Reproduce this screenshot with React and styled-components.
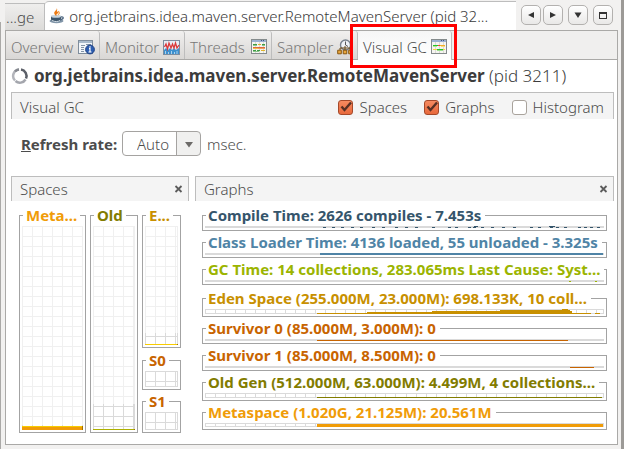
import React, { useId, useState } from "react";
import styled, { createGlobalStyle, css } from "styled-components";

const colors = {
  chrome: "#f2f1f0",
  line: "#aaa9a7",
  panelLine: "#bdbdbd",
  panel: "#f4f4f4",
  text: "#4c4c4c",
  compile: "#35556b",
  loader: "#4f84a6",
  gc: "#9bb400",
  eden: "#c89000",
  survivor: "#c86400",
  old: "#827c00",
  meta: "#f09c08",
};

const GlobalStyle = createGlobalStyle`
  * { box-sizing: border-box; }
  body {
    margin: 0;
    background: ${colors.chrome};
    color: ${colors.text};
    font: 300 15px/20px "Noto Sans", "Open Sans", sans-serif;
  }
  button, select, input { font: inherit; color: inherit; }
`;

const Window = styled.div`
  display: flex;
  flex-direction: column;
  min-height: 100vh;
  padding: 1px 3px 4px 5px;
  border-right: 3px solid #9c9a97;
  background: linear-gradient(${colors.line}, ${colors.line}) 0 22px / 1px 100% no-repeat ${colors.chrome};
`;

const TopBar = styled.header`
  display: flex;
  align-items: flex-end;
  height: 29px;
`;

const TopTabs = styled.div`
  display: flex;
  align-items: flex-end;
  flex: 1;
  min-width: 0;
`;

const TopTab = styled.button`
  display: flex;
  align-items: center;
  gap: 4px;
  height: 27px;
  padding: 0 10px 0 1px;
  border: 1px solid ${colors.panelLine};
  border-left: 0;
  border-bottom: 0;
  background: linear-gradient(#efeeed, #dcdbd9);
  white-space: nowrap;
  ${(p) => p.$active && css`
    flex: 1;
    min-width: 0;
    height: 29px;
    padding: 0 4px;
    border-right: 0;
    border-radius: 4px 0 0 0;
    background: #fff;
    color: #3a3a3a;
  `}
`;

const WindowButtons = styled.div`
  display: flex;
  gap: 5px;
  align-self: flex-start;
  padding: 4px 5px 0 5px;
`;

const RoundButton = styled.button`
  display: grid;
  place-items: center;
  width: 20px;
  height: 20px;
  padding: 0;
  border: 1px solid #b3b1af;
  border-radius: 5px;
  background: linear-gradient(#fff, #e9e8e7);
  color: #333;
`;

const ButtonPair = styled.div`
  display: flex;
  gap: 2px;
`;

const Page = styled.main`
  display: flex;
  flex-direction: column;
  flex: 1;
  border: 1px solid ${colors.line};
  border-top: 0;
  background: #fff;
`;

const ViewTabs = styled.nav`
  display: flex;
  height: 30px;
  border-top: 1px solid ${colors.line};
  border-bottom: 1px solid ${colors.line};
  background: #f0efee;
`;

const ViewTab = styled.button`
  position: relative;
  display: flex;
  align-items: center;
  justify-content: space-between;
  width: ${(p) => p.$width}px;
  padding: 3px 4px 0 5px;
  border: 0;
  border-right: 1px solid ${colors.panelLine};
  border-radius: 3px 3px 0 0;
  background: linear-gradient(#f1f0ef, #d9d7d5);
  color: #777;
  white-space: nowrap;
  ${(p) => p.$active && css`
    height: 29px;
    background: linear-gradient(#f6f6f6, #fff);
    color: ${colors.text};
    &::after {
      content: "";
      position: absolute;
      inset: -7px -6px -8px -8px;
      border: 3px solid #f00;
      pointer-events: none;
    }
  `}
`;

const Title = styled.h1`
  display: flex;
  align-items: center;
  gap: 5px;
  height: 32px;
  margin: 0;
  padding: 0 5px;
  color: #3c3c3c;
  font-size: 17px;
  font-weight: 300;
  white-space: nowrap;
  b { font-weight: 700; }
`;

const Content = styled.div`
  padding: 0 3px 10px 5px;
`;

const Toolbar = styled.div`
  display: flex;
  align-items: center;
  gap: 17px;
  height: 27px;
  padding: 2px 9px 0 8px;
  border: 1px solid ${colors.panelLine};
  border-bottom: 0;
  background: ${colors.panel};
`;

const ToolbarTitle = styled.span`
  flex: 1;
`;

const CheckLabel = styled.label`
  display: flex;
  align-items: center;
  gap: 6px;
`;

const CheckBox = styled.input`
  appearance: none;
  width: 15px;
  height: 15px;
  margin: 0;
  border: 1px solid #a9a39c;
  border-radius: 3px;
  background: #fff;
  &:checked {
    border-color: #a5492a;
    background:
      url("data:image/svg+xml,%3Csvg xmlns='http://www.w3.org/2000/svg' viewBox='0 0 13 13'%3E%3Cpath d='M2.5 5.5L5.5 9L12 1.5' fill='none' stroke='%23573024' stroke-width='2.4'/%3E%3C/svg%3E") center / 13px 13px no-repeat,
      linear-gradient(#f58a60, #e8693c);
  }
`;

const RateRow = styled.div`
  display: flex;
  align-items: center;
  height: 57px;
  padding: 0 10px 8px;
`;

const RateLabel = styled.label`
  width: 101px;
  font-weight: 700;
  &::first-letter { text-decoration: underline; }
`;

const SelectBox = styled.div`
  position: relative;
  margin-right: 6px;
`;

const Select = styled.select`
  appearance: none;
  display: block;
  width: 79px;
  height: 25px;
  padding: 0 26px 0 14px;
  border: 1px solid #a5a3a1;
  border-radius: 4px;
  background: linear-gradient(90deg, #fff 53px, #a5a3a1 53px, #a5a3a1 54px, #f0f0ef 54px);
`;

const SelectArrow = styled.svg`
  position: absolute;
  right: 7px;
  top: 11px;
  pointer-events: none;
`;

const Panels = styled.div`
  display: flex;
  gap: 6px;
`;

const Panel = styled.section`
  width: ${(p) => (p.$narrow ? "178px" : "auto")};
  flex: ${(p) => (p.$narrow ? "none" : 1)};
  min-width: 0;
`;

const PanelHeader = styled.header`
  display: flex;
  align-items: center;
  justify-content: space-between;
  height: 25px;
  padding: 0 4px 0 8px;
  border: 1px solid ${colors.panelLine};
  border-bottom: 0;
  background: ${colors.panel};
`;

const PanelTitle = styled.h2`
  margin: 0;
  font-size: 15px;
  font-weight: 300;
`;

const CloseButton = styled.button`
  display: grid;
  padding: 0;
  border: 0;
  background: none;
`;

const SpacesBody = styled.div`
  display: flex;
  gap: 4px;
  padding: 6px 8px 0;
`;

const SpaceColumn = styled.div`
  display: flex;
  flex-direction: column;
  justify-content: space-between;
`;

const Frame = styled.fieldset`
  min-width: 0;
  margin: 0;
  padding: 0 2px 2px;
  border: 1px solid #a3a3a3;
`;

const SpaceFrame = styled(Frame)`
  padding-top: 2px;
`;

const Legend = styled.legend`
  margin-left: 1px;
  padding: 0 3px;
  color: ${(p) => p.$color};
  font-size: 15px;
  font-weight: 700;
  line-height: 17px;
  white-space: nowrap;
`;

const GraphLegend = styled(Legend)`
  padding: 0 4px 0 2px;
`;

const GraphList = styled.div`
  display: flex;
  flex-direction: column;
  gap: 3px;
  padding: 6px 7px 0;
`;

const GraphFrame = styled(Frame)`
  margin-bottom: ${(p) => (p.$gapAfter ? 2 : 0)}px;
`;

const Chart = styled.svg`
  display: block;
  shape-rendering: crispEdges;
`;

const GraphChart = styled(Chart)`
  width: 100%;
`;

function lines(size, step = 10) {
  const out = [];
  for (let i = 0; i < size; i += step) out.push(i);
  out.push(size - 1);
  return [...new Set(out)];
}

function SpaceChart({ width, height, committed = 0, used = 0, color, edge }) {
  const dark = height - committed;
  return (
    <Chart width={width} height={height} aria-hidden="true">
      {lines(width).map((x) => (
        <g key={"x" + x}>
          <rect x={x} y="0" width="1" height={height} fill="#f0f0f0" />
          <rect x={x} y={dark} width="1" height={committed} fill="#dadada" />
        </g>
      ))}
      {lines(height).map((y) => (
        <rect key={"y" + y} x="0" y={y} width={width} height="1" fill={y >= dark ? "#dadada" : "#f0f0f0"} />
      ))}
      {used > 0 && <rect x="0" y={height - used} width={width} height={used} fill={color} />}
      {used > 0 && <rect x="0" y={height - used} width={width} height="1" fill={edge} />}
      {used > 0 && <rect x={width - 1} y={height - used} width="1" height={used} fill="#a07000" />}
    </Chart>
  );
}

function Space({ name, label, color, ...chart }) {
  return (
    <SpaceFrame aria-label={name}>
      <Legend $color={color}>{label}</Legend>
      <SpaceChart color={color} {...chart} />
    </SpaceFrame>
  );
}

const compileDots = [118, 127, 136, 146, 155, 167, 177, 190, 199, 209, 226, 242, 249, 262, 267, 275, 285, 296, 307, 324, 332, 344, 350, 358, 372, 378, 384, 391];

const graphs = [
  { label: "Compile Time: 2626 compiles - 7.453s", color: colors.compile, strip: 2, marks: compileDots.map((x) => [x, 1, 3, 1]).concat([[343, 0, 6, 1], [268, 0, 4, 1]]) },
  { label: "Class Loader Time: 4136 loaded, 55 unloaded - 3.325s", color: colors.loader, strip: 2, marks: [[115, 0, 282, 2]] },
  { label: "GC Time: 14 collections, 283.065ms Last Cause: Syst...", color: colors.gc, strip: 2, gapAfter: true, marks: [[363, 1, 2, 1], [389, 1, 2, 1]] },
  { label: "Eden Space (255.000M, 23.000M): 698.133K, 10 coll...", color: colors.eden, strip: 5, marks: [[112, 4, 254, 1], [162, 3, 204, 2], [226, 2, 140, 3], [294, 1, 70, 4], [356, 0, 6, 5], [366, 4, 19, 1], [389, 4, 5, 1]] },
  { label: "Survivor 0 (85.000M, 3.000M): 0", color: colors.survivor, strip: 2, marks: [[112, 1, 250, 1]] },
  { label: "Survivor 1 (85.000M, 8.500M): 0", color: colors.survivor, strip: 2, marks: [[364, 1, 24, 1]] },
  { label: "Old Gen (512.000M, 63.000M): 4.499M, 4 collections...", color: colors.old, strip: 5, marks: [[112, 4, 284, 1]] },
  { label: "Metaspace (1.020G, 21.125M): 20.561M", color: colors.meta, strip: 4, marks: [[112, 1, 285, 3]] },
];

function Graph({ label, color, strip, marks, gapAfter }) {
  return (
    <GraphFrame $gapAfter={gapAfter}>
      <GraphLegend $color={color}>{label}</GraphLegend>
      <GraphChart viewBox={`0 -2 398 ${strip + 2}`} height={strip + 2} preserveAspectRatio="none" aria-hidden="true">
        <rect width="398" height={strip} fill="#dadada" />
        {strip > 2 && lines(398).slice(0, -1).map((x) => (
          <rect key={x} x={x + 1} y="1" width="9" height={strip - 2} fill="#fff" />
        ))}
        {strip > 2 && <rect x="397" width="1" height={strip} fill="#dadada" />}
        {marks.map(([x, y, w, h], i) => (
          <rect key={i} x={x} y={y} width={w} height={h} fill={color} />
        ))}
      </GraphChart>
    </GraphFrame>
  );
}

const JavaIcon = () => (
  <svg width="16" height="16" viewBox="0 0 16 16" aria-hidden="true">
    <ellipse cx="7.5" cy="13" rx="7" ry="2.2" fill="#8095a8" />
    <path d="M2 8h10v3c0 2-2 3-5 3s-5-1-5-3z" fill="#3e566b" />
    <path d="M12 9c3-.8 3 2.300-.5 2.500" fill="none" stroke="#4d6680" strokeWidth="1.300" />
    <ellipse cx="7" cy="8.300" rx="5" ry="1.500" fill="#c6d3dd" />
    <path d="M3 12.500c3 1.500 6 1.300 8 0" fill="none" stroke="#d5dfe8" />
    <path d="M7.500 0c1.500 2-3.500 3.500-2 6 .5 1.400 2 2 2 2-1-2.500 3-2.500 2.500-5.500C9.700 4 7 4 8 2.500 8.500 1.500 8 .5 7.500 0z" fill="#ed7a12" />
    <path d="M10.500 3c.5 2-2 2.500-1.700 4.500 1.500-1 3-2.300 1.700-4.500z" fill="#f59a3c" />
  </svg>
);

const OverviewIcon = () => (
  <svg width="17" height="16" viewBox="0 0 17 16" aria-hidden="true">
    <rect x=".5" y="1.500" width="14" height="13" fill="#f2f6fa" stroke="#7f8d9c" />
    <rect x="1" y="2" width="13" height="2" fill="#a8bacb" />
    <path d="M3 6.500h4M3 8.500h3M3 10.500h3M3 12.500h3M8 5.500h5" stroke="#8193a6" />
    <circle cx="12" cy="10.500" r="4.400" fill="#2c5db0" stroke="#1f4284" />
    <path d="M12 7.200v1.600M11 9.700h1v3M10.500 13h3" fill="none" stroke="#fff" strokeWidth="1.200" />
  </svg>
);

const MonitorIcon = () => (
  <svg width="17" height="16" viewBox="0 0 17 16" aria-hidden="true">
    <rect x=".5" y="1.500" width="16" height="14" fill="#e6edf5" stroke="#7d8c9d" />
    <path d="M1 11l2-2 2 2 2-2 2 2 2-2 2 2 3-2v6H1z" fill="#3c90cf" />
    <path d="M1.500 8L3 5l1.500 5L6 4l2 5 1.500-4L11 9l1.500-5L14 9l2-3" fill="none" stroke="#db3939" strokeWidth="1.300" />
    <path d="M2.500 15v-3M5.500 15v-2M8.500 15v-3M11.500 15v-2M14 15v-3" stroke="#a8d0ec" />
  </svg>
);

const GridIcon = ({ rows }) => (
  <svg width="16" height="16" viewBox="0 0 16 16" shapeRendering="crispEdges" aria-hidden="true">
    <rect x=".5" y=".5" width="15" height="14" fill="#f6f5f1" stroke="#858b8c" />
    <rect x="1" y="1" width="14" height="2" fill="#9db2d3" />
    <path d="M10 1.500h1M12 1.500h1" stroke="#41577a" />
    <path d="M4.500 3v11M8.500 3v11M12.500 3v11" stroke="#dcdcd5" />
    {rows.map(([y, ...segments]) => segments.map(([x, width, fill]) => (
      <rect key={y + "-" + x} x={x} y={y} width={width} height="1" fill={fill} />
    )))}
  </svg>
);

const threadRows = [
  [5, [2, 4, "#3f9c46"], [7, 3, "#e0b42c"], [11, 3, "#3f9c46"]],
  [6, [2, 4, "#8cc68c"], [11, 3, "#8cc68c"]],
  [8, [2, 12, "#df6a3c"]],
  [9, [2, 5, "#eec04a"], [7, 7, "#f0a060"]],
  [11, [2, 3, "#3f9c46"], [6, 3, "#3f9c46"], [10, 4, "#e0b42c"]],
  [12, [2, 6, "#8cc68c"]],
];

const gcRows = [
  [6, [2, 5, "#22c42c"], [7, 2, "#f04a30"], [9, 5, "#f2b02a"]],
  [7, [2, 4, "#b6e68a"], [10, 4, "#f8dc80"]],
  [10, [2, 4, "#f4d348"], [6, 6, "#22c42c"], [12, 2, "#f4d348"]],
  [11, [6, 6, "#9be08c"]],
];

const SamplerIcon = () => (
  <svg width="16" height="16" viewBox="0 0 16 16" aria-hidden="true">
    <circle cx="8.500" cy="6" r="5" fill="#eef2f6" stroke="#77818d" strokeWidth="1.400" />
    <path d="M8.500 2.500V6L11 7.500" fill="none" stroke="#555" />
    <path d="M3 11V9h10v2M8 7v4" fill="none" stroke="#6b4a18" />
    <path d="M.7 11.200h3.600v3.600H.7zM6.200 11.200h3.600v3.600H6.200zM11.700 11.200h3.600v3.600h-3.600z" fill="#e9a63c" stroke="#86550e" />
  </svg>
);

const BusyIcon = () => (
  <svg width="18" height="18" viewBox="0 0 18 18" fill="none" strokeWidth="2.500" aria-hidden="true">
    <path d="M8 2.500A6.500 6.500 0 0 0 4 13.500" stroke="#b3b5bb" />
    <path d="M4.500 14A6.500 6.500 0 0 0 14.500 12.500" stroke="#a4a6ad" />
    <path d="M10 2.500A6.500 6.500 0 0 1 15 11.500" stroke="#5b5f68" />
    <path d="M4 4.500A6.500 6.500 0 0 1 8 2.500" stroke="#85888f" />
  </svg>
);

const Glyph = ({ d }) => (
  <svg width="10" height="10" viewBox="0 0 10 10" aria-hidden="true">
    <path d={d} fill="currentColor" fillRule="evenodd" />
  </svg>
);

const CloseIcon = () => (
  <svg width="10" height="8" viewBox="0 0 10 8" aria-hidden="true">
    <path d="M1.500 1l6 6M7.500 1l-6 6" stroke="#5c5c5c" strokeWidth="1.800" />
  </svg>
);

const views = [
  { name: "Overview", width: 94, icon: <OverviewIcon /> },
  { name: "Monitor", width: 85, icon: <MonitorIcon /> },
  { name: "Threads", width: 87, icon: <GridIcon rows={threadRows} /> },
  { name: "Sampler", width: 86, icon: <SamplerIcon /> },
  { name: "Visual GC", width: 94, icon: <GridIcon rows={gcRows} /> },
];

function Check({ label, initial = false }) {
  const id = useId();
  const [checked, setChecked] = useState(initial);
  return (
    <CheckLabel htmlFor={id}>
      <CheckBox id={id} type="checkbox" checked={checked} onChange={(e) => setChecked(e.target.checked)} />
      {label}
    </CheckLabel>
  );
}

function ClosablePanel({ title, narrow, children }) {
  return (
    <Panel $narrow={narrow}>
      <PanelHeader>
        <PanelTitle>{title}</PanelTitle>
        <CloseButton type="button" aria-label={`Close ${title}`}><CloseIcon /></CloseButton>
      </PanelHeader>
      {children}
    </Panel>
  );
}

export default function App() {
  return (
    <Window>
      <GlobalStyle />
      <TopBar>
        <TopTabs>
          <TopTab type="button">...ge</TopTab>
          <TopTab type="button" $active>
            <JavaIcon />
            org.jetbrains.idea.maven.server.RemoteMavenServer (pid 32...
          </TopTab>
        </TopTabs>
        <WindowButtons>
          <ButtonPair>
            <RoundButton type="button" aria-label="Previous"><Glyph d="M8 2v6L2 5z" /></RoundButton>
            <RoundButton type="button" aria-label="Next"><Glyph d="M2 2v6l6-3z" /></RoundButton>
          </ButtonPair>
          <RoundButton type="button" aria-label="List windows"><Glyph d="M1.500 2.500h7L5 8z" /></RoundButton>
          <RoundButton type="button" aria-label="Maximize"><Glyph d="M1 2h8v7H1zM2 4v4h6V4z" /></RoundButton>
        </WindowButtons>
      </TopBar>
      <Page>
        <ViewTabs>
          {views.map((v) => (
            <ViewTab key={v.name} type="button" $width={v.width} $active={v.name === "Visual GC"}>
              {v.name}
              {v.icon}
            </ViewTab>
          ))}
        </ViewTabs>
        <Title>
          <BusyIcon />
          <span><b>org.jetbrains.idea.maven.server.RemoteMavenServer</b> (pid 3211)</span>
        </Title>
        <Content>
          <Toolbar>
            <ToolbarTitle>Visual GC</ToolbarTitle>
            <Check label="Spaces" initial />
            <Check label="Graphs" initial />
            <Check label="Histogram" />
          </Toolbar>
          <RateRow>
            <RateLabel htmlFor="refresh-rate">Refresh rate:</RateLabel>
            <SelectBox>
              <Select id="refresh-rate" defaultValue="Auto">
                <option>Auto</option>
              </Select>
              <SelectArrow width="10" height="6" viewBox="0 0 10 6" aria-hidden="true">
                <path d="M1 0h8L5 5.500z" fill="#6c6a68" />
              </SelectArrow>
            </SelectBox>
            msec.
          </RateRow>
          <Panels>
            <ClosablePanel title="Spaces" narrow>
              <SpacesBody>
                <Space name="Metaspace" label="Meta..." color={colors.meta} edge="#f8cc00" width={61} height={204} committed={5} used={4} />
                <Space name="Old" label="Old" color={colors.old} edge="#adb000" width={42} height={204} committed={26} used={1} />
                <SpaceColumn>
                  <Space name="Eden" label="E..." color={colors.eden} edge="#f8cc00" width={33} height={119} committed={12} used={1} />
                  <Space name="Survivor 0" label="S0" color={colors.survivor} width={33} height={16} committed={16} />
                  <Space name="Survivor 1" label="S1" color={colors.survivor} width={33} height={18} committed={18} />
                </SpaceColumn>
              </SpacesBody>
            </ClosablePanel>
            <ClosablePanel title="Graphs">
              <GraphList>
                {graphs.map((g) => <Graph key={g.label} {...g} />)}
              </GraphList>
            </ClosablePanel>
          </Panels>
        </Content>
      </Page>
    </Window>
  );
}
